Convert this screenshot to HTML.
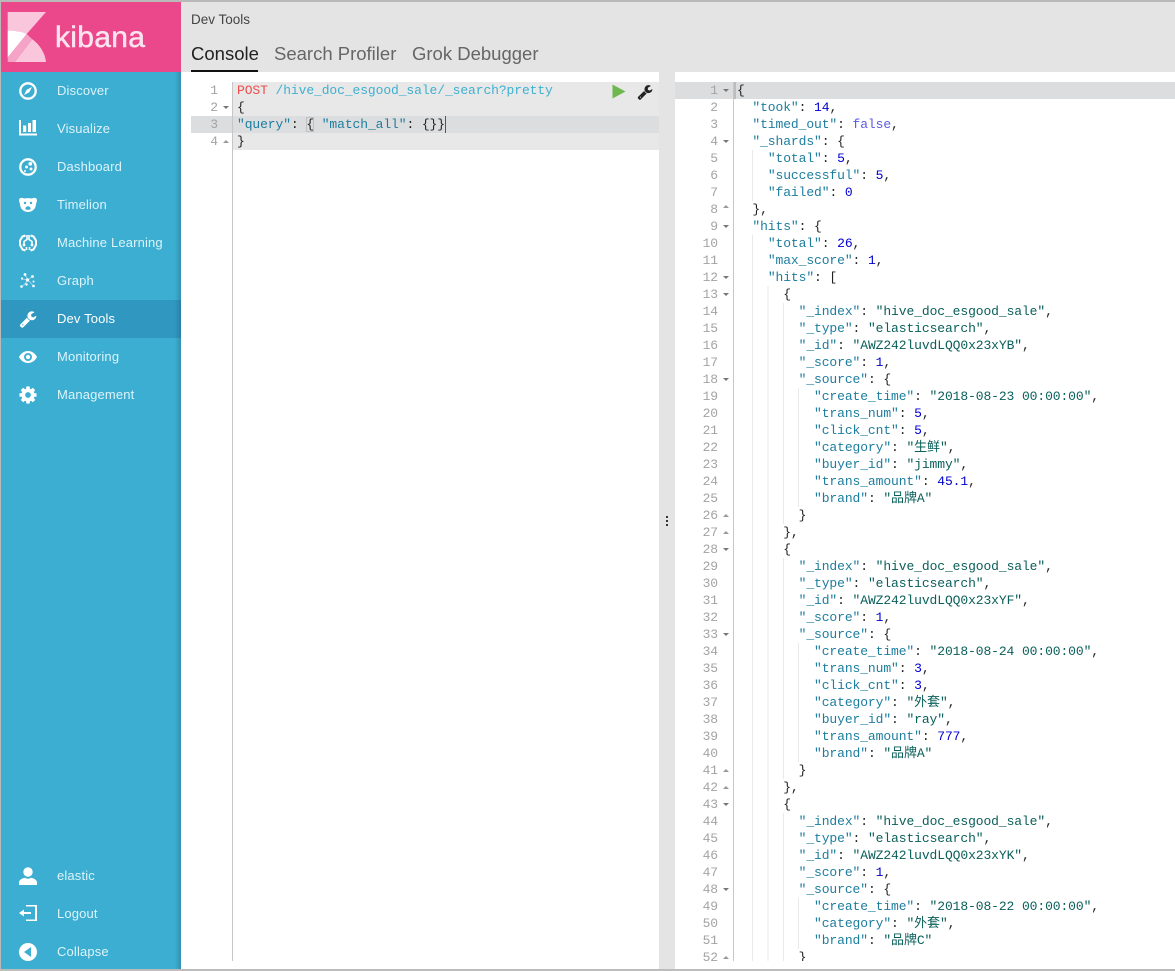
<!DOCTYPE html>
<html><head><meta charset="utf-8"><title>Kibana Dev Tools</title>
<style>
html,body{margin:0;padding:0;width:1175px;height:971px;overflow:hidden;background:#fff}
body{position:relative;font-family:"Liberation Sans",sans-serif}
div{box-sizing:border-box}
.a{position:absolute}
#side{left:1px;top:72px;width:180px;height:897px;background:#3caed2}
#shadow{left:175px;top:72px;width:6px;height:897px;background:linear-gradient(90deg,#3caed2,#3290b0)}
#act{left:1px;top:300px;width:180px;height:38px;background:linear-gradient(90deg,#2f97c0 0,#2f97c0 174px,#2a7fa3 180px)}
.t{position:absolute;left:57px;font-size:13px;letter-spacing:.15px;line-height:20px;color:#dcf3fa;white-space:nowrap}
.ic{position:absolute;left:19px;width:18px;height:18px;fill:#fff}
#hd{left:181px;top:2px;width:994px;height:70px;background:#e4e4e4}
.tab{position:absolute;top:42px;font-size:18.5px;line-height:20px;color:#666;white-space:nowrap}
.m{font-family:"Liberation Mono","Noto Sans CJK SC",monospace;font-size:13px;line-height:17px;letter-spacing:-.1px}
.l{height:17px;position:relative;white-space:pre}
.n{position:absolute;text-align:right;color:#a3a3a3;line-height:17px;font-size:13px;font-family:"Liberation Mono",monospace;letter-spacing:-.1px}
.u,.d{position:absolute;width:0;height:0;border-left:3px solid transparent;border-right:3px solid transparent}
.d{border-top:3px solid #777}.u{border-bottom:3px solid #999}
.k{color:#1d7d9f}.s{color:#0a5f5a}.v{color:#0000d0}.b{color:#5a5ae0}
.g:before{content:"";position:absolute;left:15px;top:0;height:17px;background:repeating-linear-gradient(90deg,#e9e9e9 0,#e9e9e9 1px,transparent 1px,transparent 15.4px)}
.g1:before{width:2px}.g2:before{width:17px}.g3:before{width:33px}.g4:before{width:48px}
</style></head>
<body>
<!-- window borders -->
<div class="a" style="left:0;top:0;width:1175px;height:2px;background:#b9b9b9"></div>
<div class="a" style="left:0;top:0;width:1px;height:971px;background:#b9b9b9"></div>
<div class="a" style="left:0;top:969px;width:1175px;height:2px;background:#bcbcbc"></div>

<!-- logo -->
<div class="a" style="left:1px;top:2px;width:180px;height:70px;background:#ea488b"></div>
<svg class="a" style="left:0;top:0" width="60" height="72">
<polygon points="7.7,12 46,12 26.7,34 17,31 7.7,30.7" fill="#f9c6dc"/>
<path d="M7.7 30.7C15 30.500 21.500 31.700 26.700 34L7.700 57.500Z" fill="#fff"/>
<polygon points="26.7,34 32.3,39.3 15,62 7.7,62 7.7,57.5" fill="#f5a3c7"/>
<path d="M15 62L32.300 39.300C40 45 45 53 46 62Z" fill="#f9c6dc"/>
</svg>
<div class="a" style="left:55px;top:20px;font-size:30px;line-height:36px;color:#fce3ee;white-space:nowrap;letter-spacing:.3px;-webkit-text-stroke:.5px #fce3ee">kibana</div>

<!-- sidebar -->
<div class="a" id="side"></div>
<div class="a" id="shadow"></div>
<div class="a" id="act"></div>
<div class="t" style="top:81px">Discover</div>
<div class="t" style="top:119px">Visualize</div>
<div class="t" style="top:157px">Dashboard</div>
<div class="t" style="top:195px">Timelion</div>
<div class="t" style="top:233px">Machine Learning</div>
<div class="t" style="top:271px">Graph</div>
<div class="t" style="top:309px;color:#fff">Dev Tools</div>
<div class="t" style="top:347px">Monitoring</div>
<div class="t" style="top:385px">Management</div>
<div class="t" style="top:866px">elastic</div>
<div class="t" style="top:904px">Logout</div>
<div class="t" style="top:942px">Collapse</div>

<svg class="ic" style="top:82px" viewBox="0 0 18 18"><circle cx="9" cy="9" r="7.700" fill="none" stroke="#fff" stroke-width="2.300"/><path d="M13 5L10.300 10.300 5 13 7.700 7.700Z"/></svg>
<svg class="ic" style="top:120px" viewBox="0 0 18 18"><path d="M0 0h2v13.500h16v2H0z"/><rect x="4" y="5.500" width="3.200" height="6.500"/><rect x="9" y="3" width="3" height="9"/><rect x="13.500" y="0" width="3.500" height="12"/></svg>
<svg class="ic" style="top:158px" viewBox="0 0 18 18"><circle cx="9" cy="9" r="7.700" fill="none" stroke="#fff" stroke-width="2.300"/><circle cx="11.300" cy="5.800" r="1.900"/><circle cx="7.500" cy="9" r="1.500"/><circle cx="12" cy="11" r="1.500"/><circle cx="6" cy="13" r="1"/></svg>
<svg class="ic" style="top:197px" viewBox="0 0 18 18"><path d="M.5 1.500C2 .5 3.500 .5 5 1.500 7.500 1 10.500 1 13 1.500 14.500 .5 16 .5 17.500 1.500 18.200 3 18 5 17 6.500 17.200 11 14 15 9 15 4 15 .8 11 1 6.500 0 5 -.2 3 .5 1.500Z"/><circle cx="6" cy="6" r="1.200" fill="#3caed2"/><circle cx="12" cy="6" r="1.200" fill="#3caed2"/><path d="M6.300 11.500C6.800 8.500 11.200 8.500 11.700 11.500L11 12.500C10 13 8 13 7 12.500Z" fill="#3caed2"/></svg>
<svg class="ic" style="top:234px" viewBox="0 0 18 18"><path d="M6.500 1.500L3.500 2.500 1 6.500V11L3.500 15.500 6.500 16.500" fill="none" stroke="#fff" stroke-width="2"/><path d="M11.500 1.500L14.500 2.500 17 6.500V11L14.500 15.500 11.500 16.500" fill="none" stroke="#fff" stroke-width="2"/><path d="M8 1V5.500L5 7.500V10M10 1V5.500L13 7.500V10M7.500 13V16M10.500 13V16" fill="none" stroke="#fff" stroke-width="1.600"/><circle cx="5" cy="11" r="1.400"/><circle cx="13" cy="11" r="1.400"/></svg>
<svg class="ic" style="top:272px" viewBox="0 0 18 18"><path d="M6 2.500L9 8 14 4M9 8L4 14M9 8L14 13.500M9 8L3 7" fill="none" stroke="#fff" stroke-width=".8" opacity=".6"/><circle cx="6" cy="2.500" r="1.400"/><circle cx="13.500" cy="4.500" r="1.400"/><circle cx="8.500" cy="8" r="1.600"/><circle cx="3" cy="6.500" r="1.100"/><circle cx="2.500" cy="14.500" r="1.300"/><circle cx="14.500" cy="14" r="1.300"/><circle cx="14.500" cy="9.500" r="1"/><circle cx="7.500" cy="12.500" r="1.200"/></svg>
<svg class="ic" style="top:310px" viewBox="0 0 1792 1792"><path d="M448 1472q0-26-19-45t-45-19-45 19-19 45 19 45 45 19 45-19 19-45zm644-420l-682 682q-37 37-90 37-52 0-91-37l-106-108q-38-36-38-90 0-53 38-91l681-681q39 98 114.500 173.500t173.500 114.500zm634-435q0 39-23 106-47 134-164.500 217.500t-258.500 83.500q-185 0-316.500-131.500t-131.500-316.500 131.500-316.500 316.500-131.500q58 0 121.500 16.500t107.500 46.500q16 11 16 28t-16 28l-293 169v224l193 107q5-3 79-48.500t135.500-81 70.500-35.500q15 0 23.500 10t8.500 25z"/></svg>
<svg class="ic" style="top:348px" viewBox="0 0 18 18"><path fill-rule="evenodd" d="M0 9C2 5 5.500 3 9 3s7 2 9 6c-2 4-5.500 6-9 6S2 13 0 9ZM9 5a4 4 0 1 0 0 8 4 4 0 0 0 0-8Z"/><circle cx="9" cy="9" r="2.200"/></svg>
<svg class="ic" style="top:385px;left:18px;width:20px;height:20px" viewBox="0 0 1792 1792"><path d="M1152 896q0-106-75-181t-181-75-181 75-75 181 75 181 181 75 181-75 75-181zm512-109v222q0 12-8 23t-20 13l-185 28q-19 54-39 91 35 50 107 138 10 12 10 25t-9 23q-27 37-99 108t-94 71q-12 0-26-9l-138-108q-44 23-91 38-16 136-29 186-7 28-36 28h-222q-14 0-24.500-8.500t-11.500-21.500l-28-184q-49-16-90-37l-141 107q-10 9-25 9-14 0-25-11-126-114-165-168-7-10-7-23 0-12 8-23 15-21 51-66.500t54-70.500q-27-50-41-99l-183-27q-13-2-21-12.500t-8-23.500v-222q0-12 8-23t19-13l186-28q14-46 39-92-40-57-107-138-10-12-10-24 0-10 9-23 26-36 98.500-107.500t94.500-71.500q13 0 26 10l138 107q44-23 91-38 16-136 29-186 7-28 36-28h222q14 0 24.500 8.500t11.500 21.500l28 184q49 16 90 37l142-107q9-9 24-9 13 0 25 10 129 119 165 170 7 8 7 22 0 12-8 23-15 21-51 66.500t-54 70.500q26 50 41 98l183 28q13 2 21 12.500t8 23.500z"/></svg>
<svg class="ic" style="top:867px" viewBox="0 0 18 18"><circle cx="9" cy="5" r="4.700"/><path d="M0 18V15.500C0 13 3 11.500 6 10.800 7 12 11 12 12 10.800 15 11.500 18 13 18 15.500V18Z"/></svg>
<svg class="ic" style="top:905px" viewBox="0 0 18 18"><path d="M7 0H18V16H7V14.500H16V1.500H7Z"/><path d="M0 8L5 4.500V7H12V9H5V11.500Z"/></svg>
<svg class="ic" style="top:943px" viewBox="0 0 18 18"><path fill-rule="evenodd" d="M9 0a9 9 0 1 1 0 18A9 9 0 0 1 9 0ZM12 4L5 9 12 14Z"/></svg>

<!-- header -->
<div class="a" id="hd">
<div class="a" style="left:10px;top:8px;font-size:13.500px;line-height:20px;color:#444;white-space:nowrap">Dev Tools</div>
<div class="tab" style="left:10px;color:#222">Console</div>
<div class="tab" style="left:93px">Search Profiler</div>
<div class="tab" style="left:231px">Grok Debugger</div>
<div class="a" style="left:10px;top:68px;width:67px;height:2px;background:#111"></div>
</div>

<!-- left editor -->
<div class="a" style="left:232px;top:82px;width:427px;height:68px;background:#e8e8e8"></div>
<div class="a" style="left:191px;top:116px;width:468px;height:17px;background:#dcdddf"></div>
<div class="a" style="left:232px;top:82px;width:1px;height:879px;background:#c6c6c6"></div>
<div class="n" style="left:191px;top:82px;width:27px">1</div>
<div class="n" style="left:191px;top:99px;width:27px">2</div>
<div class="n" style="left:191px;top:116px;width:27px">3</div>
<div class="n" style="left:191px;top:133px;width:27px">4</div>
<div class="d" style="left:223px;top:106px"></div>
<div class="u" style="left:223px;top:140px"></div>
<div class="a m" style="left:237px;top:82px;color:#222"><div class="l"><span style="color:#ee4b4b">POST</span> <span style="color:#3fb0d0">/hive_doc_esgood_sale/_search?pretty</span></div><div class="l">{</div><div class="l"><span class="k">"query"</span>: { <span class="k">"match_all"</span>: {}}</div><div class="l">}</div></div>
<div class="a" style="left:306px;top:117px;width:8px;height:15px;border:1px solid #c0c0c0"></div>
<div class="a" style="left:445px;top:116px;width:1px;height:17px;background:#555"></div>
<svg class="a" style="left:612px;top:84px" width="14" height="15"><polygon points="0.500,0.500 13.500,7.500 0.500,14.500" fill="#6fb84f"/></svg>
<svg class="a" style="left:637px;top:84px" width="16" height="16" viewBox="0 0 1792 1792" fill="#222"><path d="M448 1472q0-26-19-45t-45-19-45 19-19 45 19 45 45 19 45-19 19-45zm644-420l-682 682q-37 37-90 37-52 0-91-37l-106-108q-38-36-38-90 0-53 38-91l681-681q39 98 114.500 173.500t173.500 114.500zm634-435q0 39-23 106-47 134-164.500 217.500t-258.500 83.500q-185 0-316.500-131.500t-131.500-316.500 131.500-316.500 316.500-131.500q58 0 121.500 16.500t107.500 46.500q16 11 16 28t-16 28l-293 169v224l193 107q5-3 79-48.500t135.500-81 70.500-35.500q15 0 23.500 10t8.500 25z"/></svg>

<!-- resizer -->
<div class="a" style="left:659px;top:72px;width:16px;height:897px;background:#e4e4e4"></div>
<div class="a" style="left:666px;top:516px;width:2px;height:2px;background:#333;box-shadow:0 4px 0 #333,0 8px 0 #333"></div>

<!-- right editor -->
<div class="a" style="left:675px;top:82px;width:500px;height:17px;background:#dcdddf"></div>
<div class="a" style="left:733px;top:82px;width:3px;height:17px;background:#bdbdbd"></div>
<div class="a" style="left:733px;top:82px;width:1px;height:879px;background:#c6c6c6"></div>

<div class="a" style="left:675px;top:82px;width:43px;height:879px;overflow:hidden">
<div class="n" style="position:static;width:43px;white-space:pre">1
2
3
4
5
6
7
8
9
10
11
12
13
14
15
16
17
18
19
20
21
22
23
24
25
26
27
28
29
30
31
32
33
34
35
36
37
38
39
40
41
42
43
44
45
46
47
48
49
50
51
52</div>
</div>
<div class="d" style="left:723px;top:89px"></div>
<div class="d" style="left:723px;top:140px"></div>
<div class="u" style="left:723px;top:205px"></div>
<div class="d" style="left:723px;top:225px"></div>
<div class="d" style="left:723px;top:276px"></div>
<div class="d" style="left:723px;top:293px"></div>
<div class="d" style="left:723px;top:378px"></div>
<div class="u" style="left:723px;top:514px"></div>
<div class="u" style="left:723px;top:531px"></div>
<div class="d" style="left:723px;top:548px"></div>
<div class="d" style="left:723px;top:633px"></div>
<div class="u" style="left:723px;top:769px"></div>
<div class="u" style="left:723px;top:786px"></div>
<div class="d" style="left:723px;top:803px"></div>
<div class="d" style="left:723px;top:888px"></div>
<div class="u" style="left:723px;top:956px"></div>

<div class="a m" style="left:737px;top:82px;width:438px;height:879px;overflow:hidden;color:#222">
<div class="l">{</div>
<div class="l">  <span class="k">"took"</span>: <span class="v">14</span>,</div>
<div class="l">  <span class="k">"timed_out"</span>: <span class="b">false</span>,</div>
<div class="l">  <span class="k">"_shards"</span>: {</div>
<div class="l g g1">    <span class="k">"total"</span>: <span class="v">5</span>,</div>
<div class="l g g1">    <span class="k">"successful"</span>: <span class="v">5</span>,</div>
<div class="l g g1">    <span class="k">"failed"</span>: <span class="v">0</span></div>
<div class="l">  },</div>
<div class="l">  <span class="k">"hits"</span>: {</div>
<div class="l g g1">    <span class="k">"total"</span>: <span class="v">26</span>,</div>
<div class="l g g1">    <span class="k">"max_score"</span>: <span class="v">1</span>,</div>
<div class="l g g1">    <span class="k">"hits"</span>: [</div>
<div class="l g g2">      {</div>
<div class="l g g3">        <span class="k">"_index"</span>: <span class="s">"hive_doc_esgood_sale"</span>,</div>
<div class="l g g3">        <span class="k">"_type"</span>: <span class="s">"elasticsearch"</span>,</div>
<div class="l g g3">        <span class="k">"_id"</span>: <span class="s">"AWZ242luvdLQQ0x23xYB"</span>,</div>
<div class="l g g3">        <span class="k">"_score"</span>: <span class="v">1</span>,</div>
<div class="l g g3">        <span class="k">"_source"</span>: {</div>
<div class="l g g4">          <span class="k">"create_time"</span>: <span class="s">"2018-08-23 00:00:00"</span>,</div>
<div class="l g g4">          <span class="k">"trans_num"</span>: <span class="v">5</span>,</div>
<div class="l g g4">          <span class="k">"click_cnt"</span>: <span class="v">5</span>,</div>
<div class="l g g4">          <span class="k">"category"</span>: <span class="s">"生鲜"</span>,</div>
<div class="l g g4">          <span class="k">"buyer_id"</span>: <span class="s">"jimmy"</span>,</div>
<div class="l g g4">          <span class="k">"trans_amount"</span>: <span class="v">45.1</span>,</div>
<div class="l g g4">          <span class="k">"brand"</span>: <span class="s">"品牌A"</span></div>
<div class="l g g3">        }</div>
<div class="l g g2">      },</div>
<div class="l g g2">      {</div>
<div class="l g g3">        <span class="k">"_index"</span>: <span class="s">"hive_doc_esgood_sale"</span>,</div>
<div class="l g g3">        <span class="k">"_type"</span>: <span class="s">"elasticsearch"</span>,</div>
<div class="l g g3">        <span class="k">"_id"</span>: <span class="s">"AWZ242luvdLQQ0x23xYF"</span>,</div>
<div class="l g g3">        <span class="k">"_score"</span>: <span class="v">1</span>,</div>
<div class="l g g3">        <span class="k">"_source"</span>: {</div>
<div class="l g g4">          <span class="k">"create_time"</span>: <span class="s">"2018-08-24 00:00:00"</span>,</div>
<div class="l g g4">          <span class="k">"trans_num"</span>: <span class="v">3</span>,</div>
<div class="l g g4">          <span class="k">"click_cnt"</span>: <span class="v">3</span>,</div>
<div class="l g g4">          <span class="k">"category"</span>: <span class="s">"外套"</span>,</div>
<div class="l g g4">          <span class="k">"buyer_id"</span>: <span class="s">"ray"</span>,</div>
<div class="l g g4">          <span class="k">"trans_amount"</span>: <span class="v">777</span>,</div>
<div class="l g g4">          <span class="k">"brand"</span>: <span class="s">"品牌A"</span></div>
<div class="l g g3">        }</div>
<div class="l g g2">      },</div>
<div class="l g g2">      {</div>
<div class="l g g3">        <span class="k">"_index"</span>: <span class="s">"hive_doc_esgood_sale"</span>,</div>
<div class="l g g3">        <span class="k">"_type"</span>: <span class="s">"elasticsearch"</span>,</div>
<div class="l g g3">        <span class="k">"_id"</span>: <span class="s">"AWZ242luvdLQQ0x23xYK"</span>,</div>
<div class="l g g3">        <span class="k">"_score"</span>: <span class="v">1</span>,</div>
<div class="l g g3">        <span class="k">"_source"</span>: {</div>
<div class="l g g4">          <span class="k">"create_time"</span>: <span class="s">"2018-08-22 00:00:00"</span>,</div>
<div class="l g g4">          <span class="k">"category"</span>: <span class="s">"外套"</span>,</div>
<div class="l g g4">          <span class="k">"brand"</span>: <span class="s">"品牌C"</span></div>
<div class="l g g3">        }</div>
</div>
</body></html>
